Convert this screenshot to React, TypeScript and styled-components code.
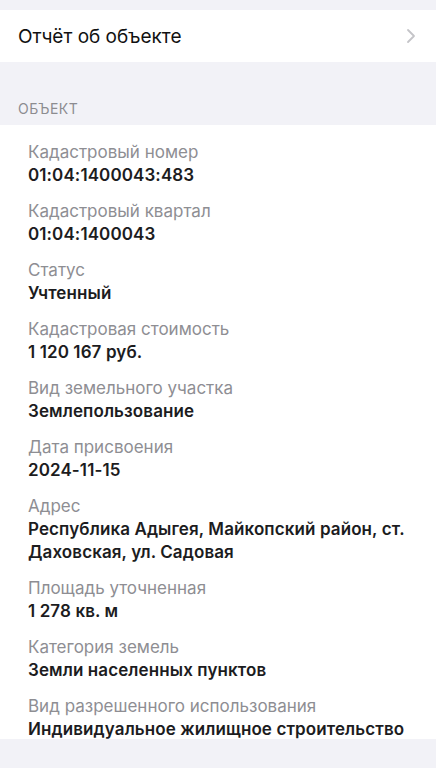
import styled, { createGlobalStyle } from "styled-components";

const GlobalStyle = createGlobalStyle`
  html, body {
    margin: 0;
    padding: 0;
    background: #f2f2f7;
    font-family: Inter, "Noto Sans", sans-serif;
    -webkit-font-smoothing: antialiased;
  }
`;

const Page = styled.div`
  display: flex;
  flex-direction: column;
  width: 436px;
  height: 768px;
  overflow: hidden;
  background: #f2f2f7;
  padding-top: 10px;
  box-sizing: border-box;
`;

const LinkRow = styled.div`
  display: flex;
  align-items: center;
  justify-content: space-between;
  height: 52px;
  padding: 0 20px 0 18px;
  background: #ffffff;
`;

const LinkTitle = styled.span`
  font-size: 19px;
  color: #111111;
`;

const SectionTitle = styled.div`
  padding: 38px 18px 0 18px;
  height: 25px;
  font-size: 14px;
  color: #8c8c90;
  letter-spacing: 0.5px;
  text-transform: uppercase;
`;

const Panel = styled.div`
  display: flex;
  flex-direction: column;
  gap: 13px;
  background: #ffffff;
  padding: 16px 22px 0 28px;
  height: 614px;
  box-sizing: border-box;
`;

const Field = styled.div`
  display: flex;
  flex-direction: column;
`;

const Label = styled.div`
  font-size: 17px;
  line-height: 23px;
  color: #8e8e93;
`;

const Value = styled.div`
  font-size: 17px;
  line-height: 23px;
  font-weight: 600;
  letter-spacing: 0.1px;
  color: #1c1c1e;
`;

const Chevron = () => (
  <svg width="10" height="16" viewBox="0 0 10 16" fill="none">
    <path d="M2 2l6 6-6 6" stroke="#c4c4c8" strokeWidth="1.8" strokeLinecap="round" strokeLinejoin="round" />
  </svg>
);

const fields = [
  ["Кадастровый номер", "01:04:1400043:483"],
  ["Кадастровый квартал", "01:04:1400043"],
  ["Статус", "Учтенный"],
  ["Кадастровая стоимость", "1 120 167 руб."],
  ["Вид земельного участка", "Землепользование"],
  ["Дата присвоения", "2024-11-15"],
  ["Адрес", "Республика Адыгея, Майкопский район, ст. Даховская, ул. Садовая"],
  ["Площадь уточненная", "1 278 кв. м"],
  ["Категория земель", "Земли населенных пунктов"],
  ["Вид разрешенного использования", "Индивидуальное жилищное строительство"],
];

export default function App() {
  return (
    <>
      <GlobalStyle />
      <Page>
        <LinkRow>
          <LinkTitle>Отчёт об объекте</LinkTitle>
          <Chevron />
        </LinkRow>
        <SectionTitle>Объект</SectionTitle>
        <Panel>
          {fields.map(([label, value]) => (
            <Field key={label}>
              <Label>{label}</Label>
              <Value>{value}</Value>
            </Field>
          ))}
        </Panel>
      </Page>
    </>
  );
}
